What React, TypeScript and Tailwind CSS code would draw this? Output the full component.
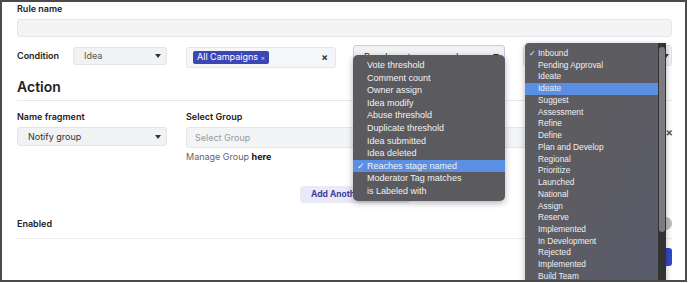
import React from 'react';

const CONDITIONS = [
  'Vote threshold',
  'Comment count',
  'Owner assign',
  'Idea modify',
  'Abuse threshold',
  'Duplicate threshold',
  'Idea submitted',
  'Idea deleted',
  'Reaches stage named',
  'Moderator Tag matches',
  'is Labeled with',
];

const STAGES = [
  'Inbound',
  'Pending Approval',
  'Ideate',
  'Ideate',
  'Suggest',
  'Assessment',
  'Refine',
  'Define',
  'Plan and Develop',
  'Regional',
  'Prioritize',
  'Launched',
  'National',
  'Assign',
  'Reserve',
  'Implemented',
  'In Development',
  'Rejected',
  'Implemented',
  'Build Team',
];

const Caret = () => (
  <svg width="6" height="4" viewBox="0 0 6 4" className="shrink-0">
    <path d="M0 0 L6 0 L3 4 Z" fill="#333" />
  </svg>
);

const Label: React.FC<{ children: React.ReactNode; className?: string }> = ({ children, className }) => (
  <div className={`text-[9px] leading-[12px] font-semibold text-[#222] ${className ?? ''}`}>{children}</div>
);

const App: React.FC = () => {
  return (
    <div className="w-[687px] h-[282px] border-2 border-[#4b4b4b] bg-white relative overflow-hidden font-['Inter',sans-serif]">
      <div className="pl-[15px] pr-[13px] pt-[1px]">
        <Label>Rule name</Label>
        <div className="mt-[4px] h-[18px] rounded-[3px] bg-[#f3f4f6] border border-[#e4e6ea]" />

        {/* Condition row */}
        <div className="mt-[8px] flex items-start">
          <Label className="w-[56px] mt-[5px]">Condition</Label>
          <div className="mt-[2px] w-[94px] h-[18px] rounded-[3px] bg-[#f1f2f4] border border-[#e2e4e8] flex items-center justify-between pl-[10px] pr-[5px]">
            <span className="text-[9px] text-[#555]">Idea</span>
            <Caret />
          </div>
          <div className="ml-[19px] mt-[2px] w-[150px] h-[21px] rounded-[3px] bg-[#f5f6f8] border border-[#e4e6ea] flex items-center justify-between pl-[6px] pr-[7px]">
            <span className="bg-[#3c46b4] text-white text-[9px] leading-[12px] rounded-[2px] px-[4px]">
              All Campaigns <span className="text-[7px] text-[#c8ccf0]">×</span>
            </span>
            <span className="text-[10px] font-bold text-[#333]">×</span>
          </div>
          <div className="ml-[17px] w-[152px] h-[20px] rounded-[3px] bg-[#f1f2f4] border border-[#c6c9ee] flex items-start justify-between pl-[10px] pr-[5px] pt-[5px]">
            <span className="text-[9px] leading-[12px] text-[#333]">Reaches stage named</span>
            <span className="mt-[3px]"><Caret /></span>
          </div>
          <div className="ml-[18px] flex-1 h-[21px] rounded-[3px] bg-[#f1f2f4] border border-[#e2e4e8] flex items-center justify-end pr-[2px]">
            <Caret />
          </div>
        </div>

        {/* Action */}
        <div className="mt-[10px] text-[14px] leading-[18px] font-semibold text-[#222]">Action</div>
        <div className="mt-[4px] h-px bg-[#e8e9ec]" />

        <div className="mt-[10px] flex items-start">
          <div className="w-[150px]">
            <Label>Name fragment</Label>
            <div className="mt-[4px] h-[19px] rounded-[3px] bg-[#f1f2f4] border border-[#e2e4e8] flex items-center justify-between pl-[10px] pr-[5px]">
              <span className="text-[9px] text-[#333]">Notify group</span>
              <Caret />
            </div>
          </div>
          <div className="ml-[19px] w-[470px]">
            <Label>Select Group</Label>
            <div className="mt-[4px] h-[21px] rounded-[3px] bg-[#f3f4f6] border border-[#e4e6ea] flex items-center pl-[8px]">
              <span className="text-[9px] text-[#999]">Select Group</span>
            </div>
            <div className="mt-[3px] text-[9px] leading-[12px] text-[#666]">
              Manage Group <span className="font-bold text-[#111]">here</span>
            </div>
          </div>
          <div className="ml-auto -mr-[1px] mt-[15px] text-[11px] leading-[12px] font-bold text-[#555]">×</div>
        </div>

        <div className="mt-[23px] ml-[283px] w-[110px] h-[17px] rounded-[4px] bg-[#e9e9f8] flex items-center pl-[11px]">
          <span className="text-[8.5px] font-bold text-[#3a3f9e]">Add Another Action</span>
        </div>

        <div className="mt-[14px] flex items-center justify-between">
          <Label>Enabled</Label>
          <div className="w-[26px] h-[13px] rounded-full bg-[#e5e5e5] flex items-center justify-end">
            <div className="w-[13px] h-[13px] rounded-full bg-[#bdbdbd]" />
          </div>
        </div>
        <div className="mt-[8px] h-px bg-[#ececee]" />
        <div className="mt-[9px] flex justify-end">
          <div className="w-[40px] h-[18px] rounded-[3px] bg-[#3546c8]" />
        </div>
      </div>

      {/* Condition type dropdown */}
      <div className="absolute left-[351px] top-[53px] w-[152px] rounded-[5px] bg-[#5b5a5f] shadow-[0_2px_6px_rgba(0,0,0,0.3)] pt-[4px] pb-[3px] font-['Liberation_Sans',sans-serif] text-[9px] leading-[12.6px] text-[#f2f2f2]">
        {CONDITIONS.map((c) => {
          const active = c === 'Reaches stage named';
          return (
            <div key={c} className={`flex pl-[4px] ${active ? 'bg-[#5a8fe4]' : ''}`}>
              <span className="w-[10px]">{active ? '✓' : ''}</span>
              <span>{c}</span>
            </div>
          );
        })}
      </div>

      {/* Stage dropdown */}
      <div className="absolute left-[523px] top-[41px] w-[141px] h-[245px] rounded-t-[4px] bg-gradient-to-br from-[#5e5c61] via-[#5d5c62] to-[#585b6e] shadow-[0_2px_6px_rgba(0,0,0,0.3)] font-['Liberation_Sans',sans-serif] text-[8.3px] leading-[11.74px] text-[#f0f0f0] flex">
        <div className="flex-1 pt-[5px]">
          {STAGES.map((s, i) => (
            <div key={i} className={`flex pl-[4px] ${i === 3 ? 'bg-[#5a8fe4]' : ''}`}>
              <span className="w-[9px]">{i === 0 ? '✓' : ''}</span>
              <span>{s}</span>
            </div>
          ))}
        </div>
        <div className="w-[8px] bg-[#333335] pt-[4px] px-[1px]">
          <div className="h-[185px] rounded-full bg-[#7c7b80]" />
        </div>
      </div>
    </div>
  );
};

export default App;
